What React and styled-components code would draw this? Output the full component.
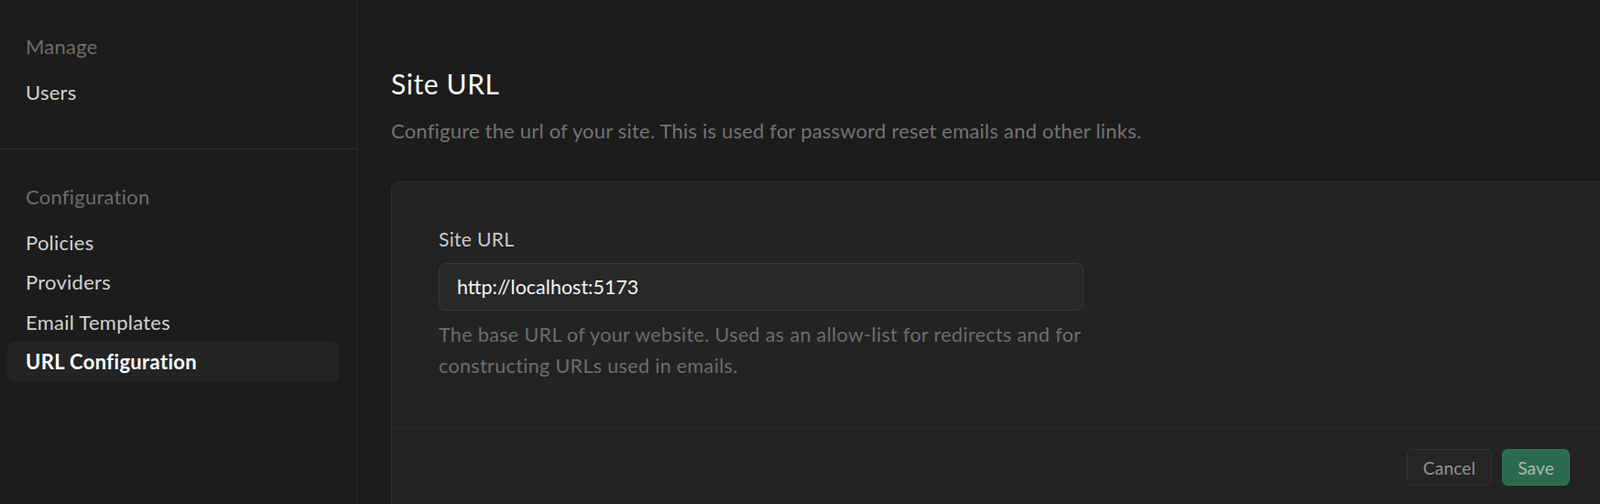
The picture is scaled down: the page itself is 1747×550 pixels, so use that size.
import React from "react";
import styled, { createGlobalStyle } from "styled-components";

const GlobalStyle = createGlobalStyle`
  html, body {
    margin: 0;
    padding: 0;
    background: #1c1c1c;
    overflow: hidden;
  }
  body {
    font-family: Lato, "Liberation Sans", sans-serif;
    -webkit-font-smoothing: antialiased;
  }
`;

const Layout = styled.div`
  display: flex;
  width: 100vw;
  height: 100vh;
  background: #1c1c1c;
`;

const Sidebar = styled.aside`
  width: 389px;
  flex-shrink: 0;
  border-right: 1px solid #2a2a2a;
  display: flex;
  flex-direction: column;
`;

const NavSection = styled.div`
  display: flex;
  flex-direction: column;
  padding: ${(p) => p.$pad};
  border-bottom: ${(p) => (p.$divider ? "1px solid #2e2e2e" : "none")};
`;

const NavHeading = styled.div`
  height: 34px;
  line-height: 34px;
  padding-left: 28px;
  margin-bottom: 11px;
  font-size: 22px;
  letter-spacing: 0.25px;
  color: #6c6c6c;
`;

const NavItem = styled.a`
  display: block;
  height: 43.5px;
  line-height: 43.5px;
  margin: 0 19px 0 8px;
  padding-left: 20px;
  border-radius: 8px;
  font-size: 22px;
  letter-spacing: ${(p) => (p.$active ? "0.35px" : "0.25px")};
  color: ${(p) => (p.$active ? "#ffffff" : "#d2d2d2")};
  font-weight: ${(p) => (p.$active ? 700 : 400)};
  background: ${(p) => (p.$active ? "#242424" : "transparent")};
  cursor: pointer;
`;

const Main = styled.main`
  flex: 1;
  min-width: 0;
  padding: 64px 0 0 37px;
  overflow: hidden;
`;

const Title = styled.h1`
  margin: 0;
  height: 54px;
  line-height: 54px;
  font-size: 30px;
  font-weight: 400;
  letter-spacing: 0.6px;
  color: #f8f8f8;
`;

const Description = styled.p`
  margin: 7px 0 0;
  height: 36px;
  line-height: 36px;
  font-size: 22px;
  letter-spacing: 0.2px;
  color: #737373;
`;

const Card = styled.section`
  margin-top: 37px;
  margin-right: -12px;
  background: #232323;
  border: 1px solid #2e2e2e;
  border-radius: 8px;
`;

const CardBody = styled.div`
  padding: 50px 51px 51px;
  border-bottom: 1px solid #2c2c2c;
`;

const Label = styled.label`
  display: block;
  height: 24px;
  line-height: 24px;
  font-size: 21px;
  letter-spacing: 0.35px;
  color: #c9c9c9;
`;

const Input = styled.input`
  display: block;
  box-sizing: border-box;
  margin-top: 14px;
  width: 704px;
  height: 52px;
  padding: 0 19px;
  background: #282828;
  border: 1px solid #393939;
  border-radius: 8px;
  font-family: inherit;
  font-size: 21.5px;
  letter-spacing: 0;
  color: #f4f4f4;
  outline: none;
`;

const Help = styled.p`
  margin: 10px 0 0;
  width: 712px;
  line-height: 33.5px;
  font-size: 21.5px;
  letter-spacing: 0.35px;
  color: #6d6d6d;
`;

const Footer = styled.div`
  display: flex;
  justify-content: flex-end;
  gap: 11px;
  padding: 22px 44px 24px 0;
`;

const Button = styled.button`
  box-sizing: border-box;
  height: 40px;
  padding: 0 ${(p) => (p.$primary ? "16px" : "17px")};
  border-radius: 6px;
  font-family: inherit;
  font-size: 19px;
  letter-spacing: 0.2px;
  border: 1px solid ${(p) => (p.$primary ? "#327556" : "#333333")};
  background: ${(p) => (p.$primary ? "#2b6a4e" : "#252525")};
  color: ${(p) => (p.$primary ? "#a9b8b0" : "#929292")};
  cursor: pointer;
`;

export default function App() {
  return (
    <>
      <GlobalStyle />
      <Layout>
        <Sidebar>
          <NavSection $pad="34px 0 39px" $divider>
            <NavHeading>Manage</NavHeading>
            <NavItem>Users</NavItem>
          </NavSection>
          <NavSection $pad="35px 0 0">
            <NavHeading>Configuration</NavHeading>
            <NavItem>Policies</NavItem>
            <NavItem>Providers</NavItem>
            <NavItem>Email Templates</NavItem>
            <NavItem $active>URL Configuration</NavItem>
          </NavSection>
        </Sidebar>
        <Main>
          <Title>Site URL</Title>
          <Description>
            Configure the url of your site. This is used for password reset
            emails and other links.
          </Description>
          <Card>
            <CardBody>
              <Label>Site URL</Label>
              <Input defaultValue="http://localhost:5173" />
              <Help>
                The base URL of your website. Used as an allow-list for
                redirects and for constructing URLs used in emails.
              </Help>
            </CardBody>
            <Footer>
              <Button>Cancel</Button>
              <Button $primary>Save</Button>
            </Footer>
          </Card>
        </Main>
      </Layout>
    </>
  );
}
